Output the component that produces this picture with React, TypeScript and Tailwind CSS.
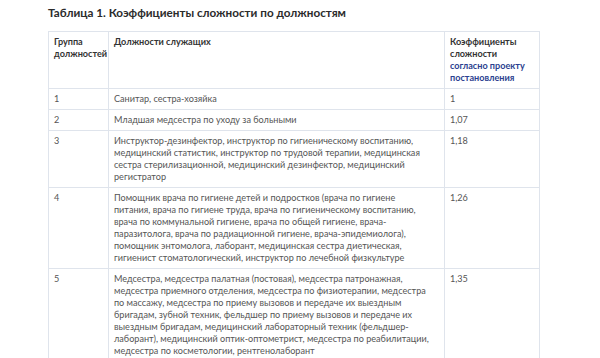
const rows: { g: string; lines: string[]; k: string }[] = [
  { g: '1', lines: ['Санитар, сестра-хозяйка'], k: '1' },
  { g: '2', lines: ['Младшая медсестра по уходу за больными'], k: '1,07' },
  {
    g: '3',
    lines: [
      'Инструктор-дезинфектор, инструктор по гигиеническому воспитанию,',
      'медицинский статистик, инструктор по трудовой терапии, медицинская',
      'сестра стерилизационной, медицинский дезинфектор, медицинский',
      'регистратор',
    ],
    k: '1,18',
  },
  {
    g: '4',
    lines: [
      'Помощник врача по гигиене детей и подростков (врача по гигиене',
      'питания, врача по гигиене труда, врача по гигиеническому воспитанию,',
      'врача по коммунальной гигиене, врача по общей гигиене, врача-',
      'паразитолога, врача по радиационной гигиене, врача-эпидемиолога),',
      'помощник энтомолога, лаборант, медицинская сестра диетическая,',
      'гигиенист стоматологический, инструктор по лечебной физкультуре',
    ],
    k: '1,26',
  },
  {
    g: '5',
    lines: [
      'Медсестра, медсестра палатная (постовая), медсестра патронажная,',
      'медсестра приемного отделения, медсестра по физиотерапии, медсестра',
      'по массажу, медсестра по приему вызовов и передаче их выездным',
      'бригадам, зубной техник, фельдшер по приему вызовов и передаче их',
      'выездным бригадам, медицинский лабораторный техник (фельдшер-',
      'лаборант), медицинский оптик-оптометрист, медсестра по реабилитации,',
      'медсестра по косметологии, рентгенолаборант',
    ],
    k: '1,35',
  },
];

const td = 'border border-[#dfe4ec] align-top px-[5px] py-[4px]';
const line = 'h-[12px] leading-[12px] whitespace-nowrap';

export default function App() {
  return (
    <div className="w-[600px] h-[358px] overflow-hidden bg-white font-['Lato',sans-serif] text-[#555]">
      <div className="pl-[48px] pt-[5px]">
        <h2 className="text-[11.7px] leading-[15px] font-bold text-[#2b2b2b]">
          Таблица 1. Коэффициенты сложности по должностям
        </h2>
        <table className="mt-[11px] w-[491px] table-fixed border-collapse text-[9.1px] leading-[12px]">
          <thead>
            <tr className="text-[#333] font-bold">
              <td className={`${td} w-[60px]`}>
                <div className={line}>Группа</div>
                <div className={line}>должностей</div>
              </td>
              <td className={`${td} w-[336px]`}>
                <div className={line}>Должности служащих</div>
              </td>
              <td className={`${td} w-[95px]`}>
                <div className={line}>Коэффициенты</div>
                <div className={line}>сложности</div>
                <div className={`${line} text-[#2c3f8f]`}>согласно проекту</div>
                <div className={`${line} text-[#2c3f8f]`}>постановления</div>
              </td>
            </tr>
          </thead>
          <tbody>
            {rows.map((r) => (
              <tr key={r.g}>
                <td className={td}>
                  <div className={line}>{r.g}</div>
                </td>
                <td className={td}>
                  {r.lines.map((l, i) => (
                    <div key={i} className={line}>
                      {l}
                    </div>
                  ))}
                </td>
                <td className={td}>
                  <div className={line}>{r.k}</div>
                </td>
              </tr>
            ))}
          </tbody>
        </table>
      </div>
    </div>
  );
}
